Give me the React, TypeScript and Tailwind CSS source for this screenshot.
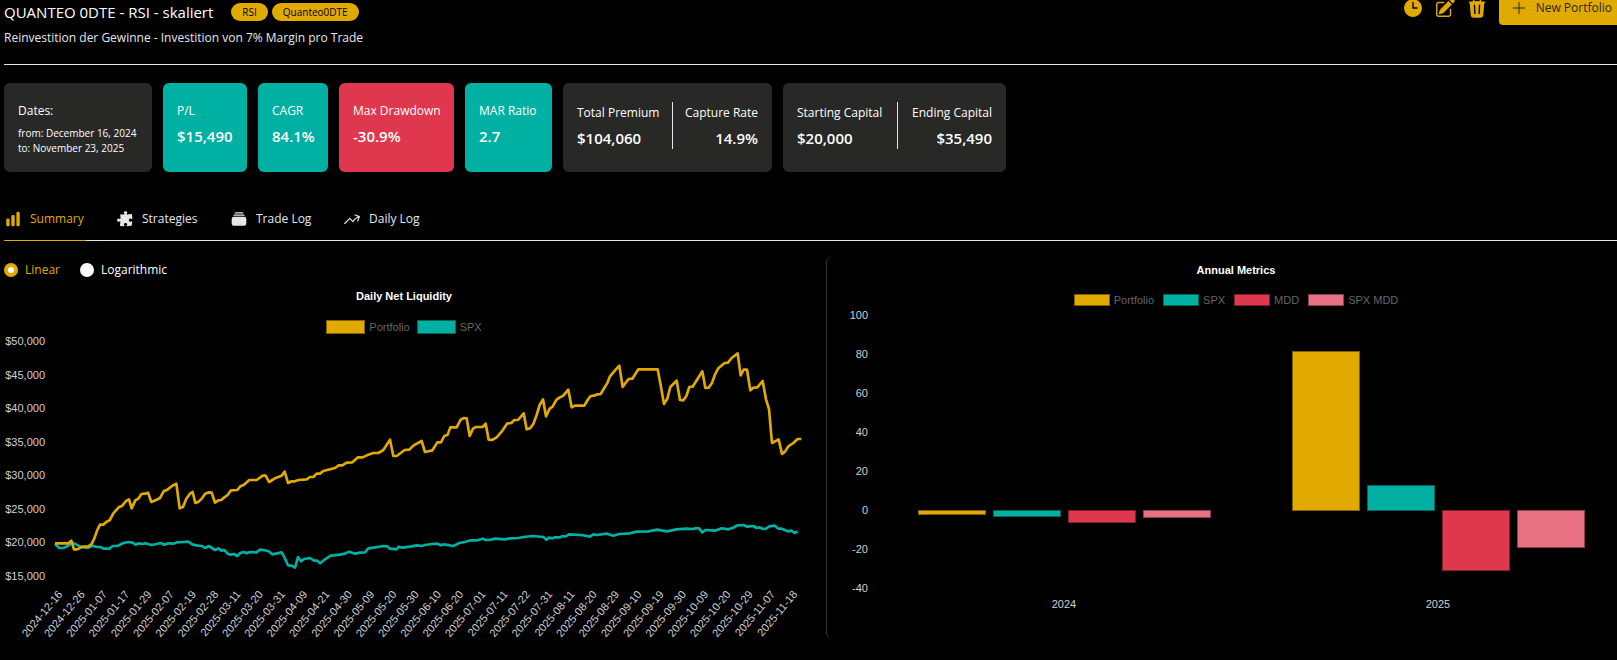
import { useState } from "react";
import type { ReactNode } from "react";
import {
  HiArrowTrendingUp,
  HiChartBar,
  HiClock,
  HiPencilSquare,
  HiPuzzlePiece,
  HiRectangleStack,
  HiTrash,
} from "react-icons/hi2";

const chartFont = "font-['Liberation_Sans',Arial,sans-serif]";

const dates = [
  "2024-12-16", "2024-12-26", "2025-01-07", "2025-01-17", "2025-01-29", "2025-02-07", "2025-02-19",
  "2025-02-28", "2025-03-11", "2025-03-20", "2025-03-31", "2025-04-09", "2025-04-21", "2025-04-30",
  "2025-05-09", "2025-05-20", "2025-05-30", "2025-06-10", "2025-06-20", "2025-07-01", "2025-07-11",
  "2025-07-22", "2025-07-31", "2025-08-11", "2025-08-20", "2025-08-29", "2025-09-10", "2025-09-19",
  "2025-09-30", "2025-10-09", "2025-10-20", "2025-10-29", "2025-11-07", "2025-11-18",
];

// Both series are sampled on a grid three times as fine as the chart's own units.
const portfolioLine =
  "165,670 205,670 214,662 222,688 232,688 248,680 265,679 275,672 283,655 292,630 300,614 310,614 320,605 329,601 340,580 356,562 367,557 378,543 387,538 395,565 406,541 416,535 424,522 435,521 444,518 454,546 468,540 480,534 491,514 502,509 516,498 529,491 539,565 549,561 559,536 570,521 578,516 586,549 596,545 606,535 615,522 625,517 635,518 645,548 655,541 664,540 673,532 683,525 693,511 712,510 721,499 731,495 748,480 770,480 788,467 797,467 807,486 825,475 845,467 854,455 864,489 875,484 885,484 895,480 920,478 930,471 940,471 950,461 960,461 970,453 1005,444 1016,436 1027,436 1040,428 1057,427 1074,412 1088,412 1105,404 1120,399 1135,399 1150,390 1170,359 1180,408 1190,408 1214,390 1228,389 1240,377 1265,363 1275,396 1297,391 1312,367 1323,367 1333,348 1343,344 1351,322 1370,322 1382,299 1392,294 1400,295 1409,348 1419,326 1428,321 1448,321 1457,311 1466,359 1476,360 1490,352 1505,335 1521,311 1534,309 1543,300 1554,300 1571,280 1580,328 1590,325 1600,312 1610,285 1619,255 1629,238 1638,289 1649,266 1658,260 1668,241 1678,233 1690,227 1705,209 1715,262 1725,257 1753,257 1763,240 1772,228 1782,227 1792,223 1802,222 1811,207 1821,191 1830,169 1845,151 1858,137 1868,201 1878,187 1886,177 1897,176 1915,148 1973,148 1981,190 1992,252 2002,236 2011,201 2030,182 2040,240 2050,241 2059,228 2068,201 2078,200 2107,154 2116,204 2126,203 2136,189 2145,163 2155,145 2174,129 2184,128 2195,114 2213,100 2222,166 2231,149 2241,149 2251,211 2260,203 2272,202 2288,183 2298,238 2307,267 2316,369 2336,358 2346,402 2355,395 2365,379 2380,369 2393,357 2404,357";
const spxLine =
  "165,672 178,684 190,684 205,677 215,668 228,673 240,680 262,684 278,677 292,681 302,681 310,686 328,686 338,678 352,678 370,669 387,666 397,668 407,674 416,670 426,672 436,670 455,675 470,672 482,669 493,674 505,670 522,671 530,667 550,666 565,665 578,674 595,677 606,678 615,684 626,678 645,690 655,685 664,692 673,690 683,701 692,704 702,702 712,708 721,699 731,696 740,700 750,696 769,697 780,689 790,690 806,694 817,703 845,697 854,713 864,736 875,737 885,743 894,711 903,724 912,717 930,714 942,722 952,722 960,730 975,718 992,707 1020,704 1035,701 1047,695 1065,701 1080,698 1095,697 1105,685 1125,682 1150,678 1162,679 1170,686 1189,688 1197,680 1207,683 1230,680 1250,676 1266,678 1275,675 1295,672 1312,671 1323,676 1332,673 1360,678 1378,669 1395,666 1412,661 1432,661 1448,656 1456,660 1468,660 1485,656 1515,658 1530,655 1555,654 1570,651 1598,648 1630,651 1639,659 1647,653 1657,655 1665,652 1680,652 1688,648 1697,649 1707,643 1745,645 1770,650 1780,643 1790,645 1820,641 1840,647 1857,642 1890,640 1910,635 1945,634 1972,629 2000,634 2030,628 2060,626 2080,627 2087,624 2098,626 2107,637 2116,630 2145,632 2165,625 2185,628 2200,623 2212,616 2230,615 2242,620 2260,618 2270,624 2279,622 2289,627 2298,626 2308,619 2325,617 2334,626 2345,626 2364,634 2374,632 2384,639 2393,634";

const years = [
  { year: "2024", center: 237, bars: [-1.9, -3.1, -6.2, -3.5] },
  { year: "2025", center: 611, bars: [81.4, 12.6, -31, -19] },
];

const barColors = [
  { fill: "fill-[#e0aa00]", stroke: "stroke-[#806100]" },
  { fill: "fill-[#00b0a2]", stroke: "stroke-[#00645c]" },
  { fill: "fill-[#df374e]", stroke: "stroke-[#80202d]" },
  { fill: "fill-[#e87284]", stroke: "stroke-[#84414b]" },
];

function Pill({ children }: { children: ReactNode }) {
  return (
    <span className="flex h-[18px] items-center rounded-full bg-[#e0aa00] px-[11px] text-[10px] text-black">
      {children}
    </span>
  );
}

function Metric({ label, value, className }: { label: string; value: string; className: string }) {
  return (
    <div className={`shrink-0 rounded-md px-[14px] pt-[19px] whitespace-nowrap ${className}`}>
      <div className="text-xs leading-[18px]">{label}</div>
      <div className="mt-[7px] text-[15px] leading-[18px] font-semibold">{value}</div>
    </div>
  );
}

function MetricPair({
  left,
  right,
  className,
}: {
  left: [string, string];
  right: [string, string];
  className: string;
}) {
  return (
    <div
      className={`flex shrink-0 items-start justify-between rounded-md bg-[#282827] px-[14px] pt-[19px] whitespace-nowrap ${className}`}
    >
      <div className="pt-[2px]">
        <div className="text-xs leading-[18px]">{left[0]}</div>
        <div className="mt-[7px] text-[15px] leading-[18px] font-semibold">{left[1]}</div>
      </div>
      <div className="h-[47px] w-px bg-gray-200" />
      <div className="pt-[2px] text-right">
        <div className="text-xs leading-[18px]">{right[0]}</div>
        <div className="mt-[7px] text-[15px] leading-[18px] font-semibold">{right[1]}</div>
      </div>
    </div>
  );
}

function Legend({
  items,
  swatch,
  className,
}: {
  items: { label: string; color: string }[];
  swatch: string;
  className: string;
}) {
  return (
    <ul className={`flex justify-center text-[11px] leading-[14px] text-[#666] ${chartFont} ${className}`}>
      {items.map((item) => (
        <li key={item.label} className="flex items-center gap-[4px]">
          <span className={`border ${swatch} ${item.color}`} />
          {item.label}
        </li>
      ))}
    </ul>
  );
}

function LiquidityChart() {
  const ticks = [50, 45, 40, 35, 30, 25, 20, 15];
  return (
    <svg
      viewBox="0 0 806 314"
      className={`block h-auto w-full overflow-visible fill-[#d0d0d0] text-[11px] ${chartFont}`}
      role="img"
      aria-label="Daily Net Liquidity"
    >
      {ticks.map((t, i) => (
        <text key={t} x={41} y={11 + i * 33.55} textAnchor="end">
          {`$${t},000`}
        </text>
      ))}
      <g transform="translate(-4 -14) scale(0.33333)" fill="none" strokeWidth={8} strokeLinejoin="round">
        <polyline points={spxLine} className="stroke-[#00b0a2]" />
        <polyline points={portfolioLine} className="stroke-[#e0aa00]" />
      </g>
      {dates.map((d, i) => (
        <text
          key={d}
          textAnchor="end"
          dominantBaseline="central"
          transform={`translate(${56 + i * 22.27} 258) rotate(-50)`}
        >
          {d}
        </text>
      ))}
    </svg>
  );
}

function AnnualChart() {
  const ticks = [100, 80, 60, 40, 20, 0, -20, -40];
  const zero = 203;
  return (
    <svg
      viewBox="0 0 790 310"
      className={`block h-auto w-full fill-[#d0d0d0] text-[11px] ${chartFont}`}
      role="img"
      aria-label="Annual Metrics"
    >
      {ticks.map((t, i) => (
        <text key={t} x={41} y={12 + i * 39} textAnchor="end">
          {t}
        </text>
      ))}
      {years.map((y) => (
        <g key={y.year}>
          {y.bars.map((v, i) => {
            const height = Math.round(Math.abs(v) * 1.95);
            return (
              <rect
                key={i}
                x={y.center - 145.5 + i * 75}
                y={v > 0 ? zero - height + 0.5 : zero + 0.5}
                width={67}
                height={height}
                className={`${barColors[i].fill} ${barColors[i].stroke}`}
              />
            );
          })}
          <text x={y.center} y={301} textAnchor="middle">
            {y.year}
          </text>
        </g>
      ))}
    </svg>
  );
}

const tabs = [
  { label: "Summary", Icon: HiChartBar, width: "w-[82px]" },
  { label: "Strategies", Icon: HiPuzzlePiece, width: "w-[84px]" },
  { label: "Trade Log", Icon: HiRectangleStack, width: "w-[83px]" },
  { label: "Daily Log", Icon: HiArrowTrendingUp, width: "w-[84px]" },
];

const scales = ["Linear", "Logarithmic"];

export default function App() {
  const [tab, setTab] = useState("Summary");
  const [scale, setScale] = useState("Linear");

  return (
    <div className="min-h-screen overflow-hidden bg-black pl-1 font-['Open_Sans','Noto_Sans',sans-serif] text-white">
      <header className="flex h-[65px] items-start justify-between border-b border-gray-200">
        <div>
          <div className="flex items-center pt-[1px]">
            <h1 className="mr-[18px] text-[15px] leading-[22px]">QUANTEO 0DTE - RSI - skaliert</h1>
            <div className="flex gap-[4px]">
              <Pill>RSI</Pill>
              <Pill>Quanteo0DTE</Pill>
            </div>
          </div>
          <p className="mt-[6px] text-xs leading-[18px] text-gray-200">
            Reinvestition der Gewinne - Investition von 7% Margin pro Trade
          </p>
        </div>
        <div className="-mt-[9px] flex h-[34px] items-center text-[22px] text-[#e0aa00]">
          <button type="button" aria-label="History" className="mr-[10px]">
            <HiClock />
          </button>
          <button type="button" aria-label="Edit" className="mr-[10px]">
            <HiPencilSquare />
          </button>
          <button type="button" aria-label="Delete" className="mr-[11px]">
            <HiTrash />
          </button>
          <button
            type="button"
            className="flex h-[34px] items-center gap-[11px] rounded-l bg-[#e0aa00] pr-[5px] pl-[14px] text-xs text-[#282827]"
          >
            <svg viewBox="0 0 12 12" className="size-3 fill-none stroke-[#282827]" aria-hidden="true">
              <path d="M6 0v12M0 6h12" />
            </svg>
            New Portfolio
          </button>
        </div>
      </header>

      <section className="mt-[18px] flex h-[89px] gap-[11px]">
        <div className="w-[148px] shrink-0 rounded-md bg-[#282827] px-[14px] pt-[19px] whitespace-nowrap">
          <div className="text-xs leading-[18px]">Dates:</div>
          <div className="mt-[6px] text-[10px] leading-[15px]">
            from: December 16, 2024
            <br />
            to: November 23, 2025
          </div>
        </div>
        <Metric label="P/L" value="$15,490" className="w-[84px] bg-[#00b0a2]" />
        <Metric label="CAGR" value="84.1%" className="w-[70px] bg-[#00b0a2]" />
        <Metric label="Max Drawdown" value="-30.9%" className="w-[115px] bg-[#df374e]" />
        <Metric label="MAR Ratio" value="2.7" className="w-[87px] bg-[#00b0a2]" />
        <MetricPair left={["Total Premium", "$104,060"]} right={["Capture Rate", "14.9%"]} className="w-[209px]" />
        <MetricPair
          left={["Starting Capital", "$20,000"]}
          right={["Ending Capital", "$35,490"]}
          className="w-[223px]"
        />
      </section>

      <nav className="mt-[24px] flex h-[45px] gap-[30px] border-b border-gray-200 text-xs">
        {tabs.map(({ label, Icon, width }) => (
          <button
            key={label}
            type="button"
            onClick={() => setTab(label)}
            className={`-mb-px flex shrink-0 items-center gap-[8px] border-b pt-[2px] whitespace-nowrap ${width} ${
              tab === label ? "border-[#e0aa00] text-[#e0aa00]" : "border-gray-200 text-gray-200"
            }`}
          >
            <Icon className="size-[18px]" />
            {label}
          </button>
        ))}
      </nav>

      <main className="grid grid-cols-[822fr_791fr] items-start pt-[15px]">
        <section className="pr-[16px]">
          <div className="flex gap-[20px] pt-[5px] text-xs leading-[18px]">
            {scales.map((s) => (
              <label key={s} className={`flex items-center gap-[7px] ${scale === s ? "text-[#e0aa00]" : ""}`}>
                <input
                  type="radio"
                  name="scale"
                  checked={scale === s}
                  onChange={() => setScale(s)}
                  className="size-[14px] appearance-none rounded-full bg-white checked:border-4 checked:border-[#e0aa00]"
                />
                {s}
              </label>
            ))}
          </div>
          <h2 className={`mt-[10px] mr-[6px] text-center text-[11px] leading-[14px] font-bold ${chartFont}`}>
            Daily Net Liquidity
          </h2>
          <Legend
            className="mt-[17px] mr-[6px] gap-[7px]"
            swatch="h-[14px] w-[39px]"
            items={[
              { label: "Portfolio", color: "border-[#806100] bg-[#e0aa00]" },
              { label: "SPX", color: "border-[#00645c] bg-[#00b0a2]" },
            ]}
          />
          <LiquidityChart />
        </section>

        <section className="min-h-[383px] rounded-l-md border-l border-[#333]">
          <h2 className={`mt-[7px] pl-[28px] text-center text-[11px] leading-[14px] font-bold ${chartFont}`}>
            Annual Metrics
          </h2>
          <Legend
            className="mt-[16px] pl-[28px] gap-[9px]"
            swatch="h-[12px] w-[36px]"
            items={[
              { label: "Portfolio", color: "border-[#806100] bg-[#e0aa00]" },
              { label: "SPX", color: "border-[#00645c] bg-[#00b0a2]" },
              { label: "MDD", color: "border-[#80202d] bg-[#df374e]" },
              { label: "SPX MDD", color: "border-[#84414b] bg-[#e87284]" },
            ]}
          />
          <AnnualChart />
        </section>
      </main>
    </div>
  );
}
